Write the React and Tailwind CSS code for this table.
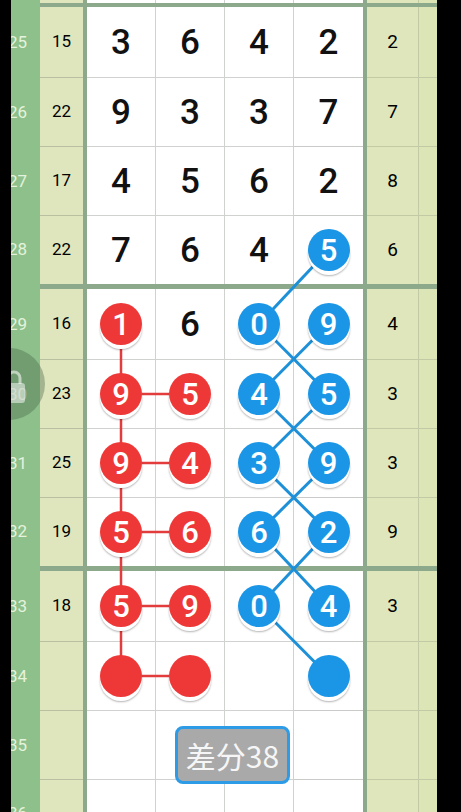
const GROUP_H = ["h-[71px]", "h-[69px]", "h-[69px]", "h-[68px]"];
const GROUP_PX = [71, 69, 69, 68];

// cell codes: "3" plain digit, "r1" red ball, "b5" blue ball, "r"/"b" empty ball, "" nothing
const GROUPS = [
  [
    { n: 25, a: 15, c: ["3", "6", "4", "2"], r: 2 },
    { n: 26, a: 22, c: ["9", "3", "3", "7"], r: 7 },
    { n: 27, a: 17, c: ["4", "5", "6", "2"], r: 8 },
    { n: 28, a: 22, c: ["7", "6", "4", "b5"], r: 6 },
  ],
  [
    { n: 29, a: 16, c: ["r1", "6", "b0", "b9"], r: 4 },
    { n: 30, a: 23, c: ["r9", "r5", "b4", "b5"], r: 3 },
    { n: 31, a: 25, c: ["r9", "r4", "b3", "b9"], r: 3 },
    { n: 32, a: 19, c: ["r5", "r6", "b6", "b2"], r: 9 },
  ],
  [
    { n: 33, a: 18, c: ["r5", "r9", "b0", "b4"], r: 3 },
    { n: 34, a: "", c: ["r", "r", "", "b"], r: "" },
    { n: 35, a: "", c: ["", "", "", ""], r: "" },
    { n: 36, a: "", c: ["", "", "", ""], r: "" },
  ],
];

// row centre y positions, for the connector drawing
const centers = {};
(() => {
  let y = 3 + 4;
  GROUPS.forEach((g) => {
    g.forEach((row, i) => {
      const content = i < 3 ? GROUP_PX[i] - 1 : GROUP_PX[i];
      centers[row.n] = y + content / 2;
      y += GROUP_PX[i];
    });
    y += 5;
  });
})();
const colX = [34, 103, 172, 241.5];

function Ball({ code }) {
  const red = code[0] === "r";
  return (
    <div
      className={`relative z-10 flex h-[42px] w-[42px] items-center justify-center rounded-full text-[31px] font-medium leading-none text-white shadow-[0_4px_0_0_#ffffff,0_5px_2px_0_rgba(0,0,0,0.3)] ${
        red ? "bg-[#ee3838]" : "bg-[#1b96e6]"
      }`}
    >
      {code.slice(1)}
    </div>
  );
}

function Cell({ code, last, bottom }) {
  return (
    <div
      className={`flex w-[69px] shrink-0 items-center justify-center bg-white ${last ? "" : "border-r border-[#d0d2d0]"} ${
        bottom ? "border-b border-[#c9cbc9]" : ""
      }`}
    >
      {code && (code[0] === "r" || code[0] === "b") ? (
        <Ball code={code} />
      ) : (
        <span className="text-[35px] font-medium leading-none text-[#111]">{code}</span>
      )}
    </div>
  );
}

function Row({ row, h, bottom }) {
  return (
    <div className={`flex shrink-0 ${h}`}>
      <div className="flex w-[29px] shrink-0 items-center justify-end overflow-hidden bg-[#8dc08a] pr-[13px] text-[17px] text-[#e4f3dd]">
        <span>{row.n}</span>
      </div>
      <div
        className={`flex w-[43px] shrink-0 items-center justify-center bg-[#dfe6bd] text-[17px] text-black ${
          bottom ? "border-b border-[#b9c0a2]" : ""
        }`}
      >
        {row.a}
      </div>
      <div className="w-[4px] shrink-0 bg-[#8da98c]" />
      {row.c.map((code, i) => (
        <Cell key={i} code={code} last={i === 3} bottom={bottom} />
      ))}
      <div className="w-[4px] shrink-0 bg-[#8da98c]" />
      <div
        className={`flex w-[51px] shrink-0 items-center justify-center bg-[#dfe6bb] text-[19px] text-black ${
          bottom ? "border-b border-[#c2c9a5]" : ""
        }`}
      >
        {row.r}
      </div>
      <div className="w-px shrink-0 bg-[#c3caa6]" />
      <div className={`w-[18px] shrink-0 bg-[#dbe5b6] ${bottom ? "border-b border-[#c2c9a5]" : ""}`} />
    </div>
  );
}

function Thick({ h }) {
  return (
    <div className={`flex shrink-0 ${h}`}>
      <div className="w-[29px] shrink-0 bg-[#8dc08a]" />
      <div className="flex-1 bg-[#8da98c]" />
    </div>
  );
}

function Connectors() {
  const red = [];
  const blue = [];
  // red: vertical spine in column 1, short links to column 2
  red.push([colX[0], centers[29], colX[0], centers[34]]);
  [30, 31, 32, 33, 34].forEach((n) => red.push([colX[0], centers[n], colX[1], centers[n]]));
  // blue: zig-zag crossings between columns 3 and 4
  blue.push([colX[3], centers[28], colX[2], centers[29]]);
  [29, 30, 31, 32].forEach((n) => {
    blue.push([colX[2], centers[n], colX[3], centers[n + 1]]);
    blue.push([colX[3], centers[n], colX[2], centers[n + 1]]);
  });
  blue.push([colX[2], centers[33], colX[3], centers[34]]);

  return (
    <svg className="pointer-events-none absolute left-[76px] top-0 z-[5]" width="276" height="812">
      {red.map(([x1, y1, x2, y2], i) => (
        <line key={"r" + i} x1={x1} y1={y1} x2={x2} y2={y2} stroke="#e23c3c" strokeWidth="2.5" />
      ))}
      {blue.map(([x1, y1, x2, y2], i) => (
        <line key={"b" + i} x1={x1} y1={y1} x2={x2} y2={y2} stroke="#1d90d8" strokeWidth="3" />
      ))}
    </svg>
  );
}

export default function App() {
  return (
    <div className="flex h-[812px] w-[461px] overflow-hidden bg-black font-[Roboto,sans-serif]">
      <div className="w-[11px] shrink-0 bg-black" />
      <div className="relative flex w-[426px] shrink-0 flex-col overflow-hidden">
        <Row row={{ n: "", a: "", c: ["", "", "", ""], r: "" }} h="h-[3px]" bottom={false} />
        <Thick h="h-[4px]" />
        {GROUPS.map((g, gi) => (
          <div key={gi} className="flex flex-col">
            {g.map((row, i) => (
              <Row key={row.n} row={row} h={GROUP_H[i]} bottom={i < 3} />
            ))}
            <Thick h="h-[5px]" />
          </div>
        ))}

        <Connectors />

        {/* floating lock button, half off screen */}
        <div className="absolute -left-[38px] top-[348px] z-20 h-[72px] w-[72px] rounded-full bg-[#4a6a4a]/40">
          <svg className="absolute left-[29px] top-[19px]" width="24" height="37" viewBox="0 0 24 37">
            <path d="M6 17 V11 a6 6 0 0 1 12 0 V17" fill="none" stroke="#ffffff" strokeOpacity="0.55" strokeWidth="3" />
            <rect x="1" y="16" width="22" height="20" rx="3" fill="#ffffff" fillOpacity="0.5" />
          </svg>
        </div>

        {/* score badge */}
        <div className="absolute left-[164px] top-[726px] z-20 flex h-[58px] w-[115px] items-center justify-center rounded-[8px] border-[3px] border-[#2d9be6] bg-[#a9a9a9] font-['Noto_Sans_CJK_SC',sans-serif] text-[30px] leading-none text-[#f6f6f6]">
          差分38
        </div>
      </div>
      <div className="w-[24px] shrink-0 bg-black" />
    </div>
  );
}
